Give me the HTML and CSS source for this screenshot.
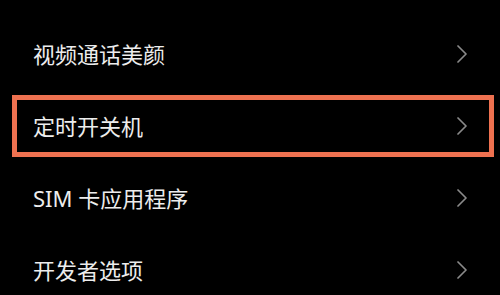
FILE: index.html
```html
<!DOCTYPE html>
<html lang="zh-CN">
<head>
<meta charset="utf-8">
<link rel="stylesheet" href="styles.css">
</head>
<body>
<ul class="list">
  <li class="row"><span class="label">视频通话美颜</span><svg class="chev" viewBox="0 0 10 18" width="10" height="18"><path d="M1 1 L9 9 L1 17" fill="none" stroke="#8a8a8a" stroke-width="1.7" stroke-linecap="round" stroke-linejoin="round"/></svg></li>
  <li class="row highlight"><span class="label">定时开关机</span><svg class="chev" viewBox="0 0 10 18" width="10" height="18"><path d="M1 1 L9 9 L1 17" fill="none" stroke="#8a8a8a" stroke-width="1.7" stroke-linecap="round" stroke-linejoin="round"/></svg></li>
  <li class="row"><span class="label">SIM 卡应用程序</span><svg class="chev" viewBox="0 0 10 18" width="10" height="18"><path d="M1 1 L9 9 L1 17" fill="none" stroke="#8a8a8a" stroke-width="1.7" stroke-linecap="round" stroke-linejoin="round"/></svg></li>
  <li class="row"><span class="label">开发者选项</span><svg class="chev" viewBox="0 0 10 18" width="10" height="18"><path d="M1 1 L9 9 L1 17" fill="none" stroke="#8a8a8a" stroke-width="1.7" stroke-linecap="round" stroke-linejoin="round"/></svg></li>
</ul>
</body>
</html>
```
FILE: styles.css
```css
html, body {
  margin: 0;
  padding: 0;
  background: #000;
  width: 500px;
  height: 295px;
  overflow: hidden;
}
.list {
  list-style: none;
  margin: 0;
  padding: 18px 0 0 0;
}
.row {
  position: relative;
  height: 72px;
  display: flex;
  align-items: center;
  justify-content: space-between;
  padding: 0 33px 0 33px;
}
.label {
  font-family: "Noto Sans", "Noto Sans CJK SC", sans-serif;
  font-size: 22px;
  color: #ededed;
  line-height: 1;
}
.chev {
  display: block;
  margin-right: 0;
}
.highlight::before {
  content: "";
  position: absolute;
  top: 5px;
  bottom: 5px;
  left: 12px;
  right: 6px;
  border: 5px solid #ee7150;
}
```
